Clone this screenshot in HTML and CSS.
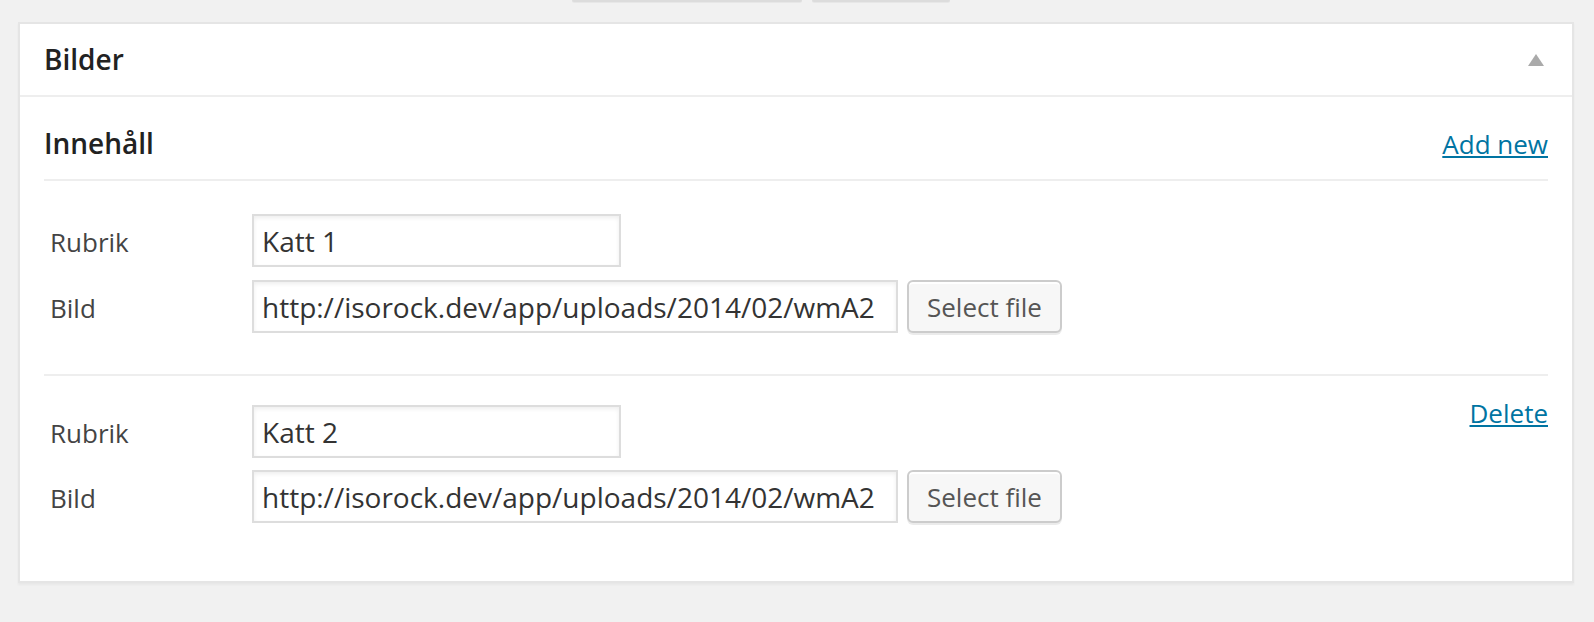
FILE: index.html
```html
<!DOCTYPE html>
<html lang="sv">
<head>
<meta charset="utf-8">
<title>Bilder</title>
<link rel="stylesheet" href="styles.css">
</head>
<body>
<div class="toolbar">
  <span class="tb-btn tb-wide"></span>
  <span class="tb-btn tb-narrow"></span>
</div>
<div class="postbox">
  <div class="postbox-header">
    <h3 class="postbox-title">Bilder</h3>
    <span class="toggle"></span>
  </div>
  <div class="inside">
    <div class="repeater-head">
      <h4 class="repeater-title">Innehåll</h4>
      <a class="link" href="#">Add new</a>
    </div>
    <div class="item item-first">
      <div class="fields">
        <div class="field">
          <label class="field-label">Rubrik</label>
          <input class="text-input short" type="text" value="Katt 1">
        </div>
        <div class="field">
          <label class="field-label">Bild</label>
          <input class="text-input long" type="text" value="http://isorock.dev/app/uploads/2014/02/wmA2">
          <button class="button" type="button">Select file</button>
        </div>
      </div>
    </div>
    <div class="item">
      <div class="fields">
        <div class="field">
          <label class="field-label">Rubrik</label>
          <input class="text-input short" type="text" value="Katt 2">
        </div>
        <div class="field">
          <label class="field-label">Bild</label>
          <input class="text-input long" type="text" value="http://isorock.dev/app/uploads/2014/02/wmA2">
          <button class="button" type="button">Select file</button>
        </div>
      </div>
      <a class="link" href="#">Delete</a>
    </div>
  </div>
</div>
</body>
</html>
```
FILE: styles.css
```css
html, body {
  margin: 0;
  padding: 0;
}
body {
  background: #f1f1f1;
  font-family: "Open Sans", "Liberation Sans", sans-serif;
  color: #444;
  width: 1594px;
  height: 622px;
  overflow: hidden;
}
.toolbar {
  height: 22px;
  display: flex;
  align-items: flex-start;
  gap: 10px;
  padding-left: 572px;
}
.tb-btn {
  display: block;
  height: 2px;
  background: #dcdcdc;
  border-radius: 0 0 3px 3px;
  box-shadow: 0 1px 0 rgba(0,0,0,0.04);
}
.tb-wide { width: 230px; }
.tb-narrow { width: 138px; }

.postbox {
  margin-left: 18px;
  width: 1556px;
  box-sizing: border-box;
  background: #fff;
  border: 2px solid #e5e5e5;
  box-shadow: 0 2px 2px rgba(0,0,0,0.04);
}
.postbox-header {
  display: flex;
  align-items: center;
  justify-content: space-between;
  padding: 16px 28px 16px 24px;
  border-bottom: 2px solid #eee;
}
.postbox-title {
  margin: 0;
  font-size: 28px;
  line-height: 39.2px;
  font-weight: 600;
  color: #222;
}
.toggle {
  width: 0;
  height: 0;
  border-left: 8px solid transparent;
  border-right: 8px solid transparent;
  border-bottom: 12px solid #aaa;
}
.inside {
  padding: 26px 24px 17px 24px;
}
.repeater-head {
  display: flex;
  align-items: baseline;
  justify-content: space-between;
  padding-bottom: 16px;
  border-bottom: 2px solid #eee;
}
.repeater-title {
  margin: 0;
  font-size: 28px;
  line-height: 40px;
  font-weight: 600;
  color: #222;
}
.link {
  font-size: 26px;
  line-height: 36px;
  color: #0074a2;
  text-decoration: underline;
  text-decoration-thickness: 2px;
  text-underline-offset: 2px;
}
.item {
  display: flex;
  justify-content: space-between;
  align-items: flex-start;
  padding: 19px 0 41px 0;
  border-top: 2px solid #eee;
}
.item-first {
  border-top: 0;
}
.fields {
  display: flex;
  flex-direction: column;
  gap: 12px;
  margin-top: 10px;
}
.item-first .fields {
  margin-top: 14px;
  gap: 13px;
}
.field {
  display: flex;
  align-items: center;
  height: 53px;
}
.field-label {
  width: 202px;
  padding-left: 6px;
  font-size: 26px;
  line-height: 36px;
  color: #444;
  margin-top: 2px;
}
.text-input {
  box-sizing: border-box;
  height: 53px;
  margin: 0;
  padding: 0 8px;
  border: 2px solid #ddd;
  background: #fff;
  box-shadow: inset 0 2px 4px rgba(0,0,0,0.07);
  font-family: "Open Sans", "Liberation Sans", sans-serif;
  font-size: 28px;
  color: #333;
  outline: none;
}
.text-input.short { width: 369px; }
.text-input.long { width: 646px; }
.button {
  box-sizing: border-box;
  margin: 0 0 0 9px;
  height: 53px;
  padding: 0 18px;
  background: #f7f7f7;
  border: 2px solid #ccc;
  border-radius: 6px;
  box-shadow: inset 0 2px 0 #fff, 0 2px 0 rgba(0,0,0,0.08);
  font-family: "Open Sans", "Liberation Sans", sans-serif;
  font-size: 26px;
  color: #555;
}
```
